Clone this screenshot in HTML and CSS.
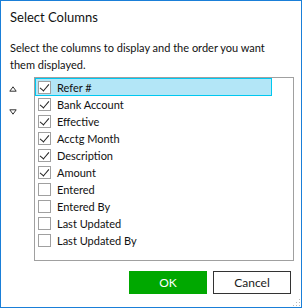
FILE: index.html
```html
<!DOCTYPE html>
<html lang="en">
<head>
    <meta charset="UTF-8">
    <title>Select Columns</title>
    <link rel="stylesheet" href="styles.css">
</head>
<body>

<div class="dialog">
    <div class="title">Select Columns</div>
    <p class="intro">Select the columns to display and the order you want them displayed.</p>

    <div class="content">
        <!-- Flechas para mover -->
        <div class="arrows">
            <svg width="8" height="6" viewBox="0 0 8 6"><path d="M4 0.8 L7.2 5.2 L0.8 5.2 Z" fill="none" stroke="#333" stroke-width="1"/></svg>
            <svg width="8" height="6" viewBox="0 0 8 6"><path d="M0.8 0.8 L7.2 0.8 L4 5.2 Z" fill="none" stroke="#333" stroke-width="1"/></svg>
        </div>

        <div class="column-list">
            <div class="col-row selected"><span class="box checked"></span>Refer #</div>
            <div class="col-row"><span class="box checked"></span>Bank Account</div>
            <div class="col-row"><span class="box checked"></span>Effective</div>
            <div class="col-row"><span class="box checked"></span>Acctg Month</div>
            <div class="col-row"><span class="box checked"></span>Description</div>
            <div class="col-row"><span class="box checked"></span>Amount</div>
            <div class="col-row"><span class="box"></span>Entered</div>
            <div class="col-row"><span class="box"></span>Entered By</div>
            <div class="col-row"><span class="box"></span>Last Updated</div>
            <div class="col-row"><span class="box"></span>Last Updated By</div>
        </div>
    </div>

    <div class="footer-buttons">
        <button class="btn-ok">OK</button>
        <button class="btn-cancel">Cancel</button>
    </div>

    <div class="grip"></div>
</div>

</body>
</html>
```

FILE: styles.css
```css
* {
    box-sizing: border-box;
    font-family: Lato, 'Noto Sans', sans-serif;
}

body {
    margin: 0;
    padding: 0;
    background-color: #ffffff;
}

.dialog {
    position: relative;
    width: 302px;
    height: 308px;
    border: 1px solid #1a7fd8;
    background-color: #ffffff;
    color: #111111;
}

.title {
    font-size: 13px;
    line-height: 16px;
    padding: 8px 0 0 9px;
}

.intro {
    margin: 0;
    padding: 14px 20px 0 9px;
    font-size: 11px;
    line-height: 17px;
}

.content {
    display: flex;
    margin-top: 4px;
}

.arrows {
    width: 33px;
    display: flex;
    flex-direction: column;
    align-items: center;
    gap: 17px;
    padding-top: 9px;
    padding-right: 9px;
}

.column-list {
    width: 260px;
    height: 184px;
    border: 1px solid #a0a0a0;
    padding: 0;
}

.col-row {
    display: flex;
    align-items: center;
    width: 237px;
    height: 17px;
    font-size: 11px;
    border: 1px solid transparent;
    padding-left: 2px;
}

.col-row.selected {
    background-color: #b3e6f7;
    border-color: #00c8f0;
    height: 18px;
}

.box {
    width: 13px;
    height: 13px;
    border: 1px solid #a0a0a0;
    background-color: #ffffff;
    margin-right: 6px;
    position: relative;
}

.box.checked::after {
    content: "";
    position: absolute;
    left: 3px;
    top: 0px;
    width: 4px;
    height: 8px;
    border-right: 1.5px solid #222;
    border-bottom: 1.5px solid #222;
    transform: rotate(40deg);
}

/* BOTONES */
.footer-buttons {
    display: flex;
    justify-content: flex-end;
    gap: 6px;
    padding: 10px 10px 0 0;
}

.footer-buttons button {
    width: 78px;
    height: 23px;
    font-size: 12px;
    border-radius: 0;
    cursor: pointer;
}

.btn-ok {
    background-color: #00a800;
    color: #ffffff;
    border: 1px solid #00a800;
}

.btn-cancel {
    background-color: #ffffff;
    color: #1a1a1a;
    border: 1px solid #333333;
}

.grip {
    position: absolute;
    right: 1px;
    bottom: 1px;
    width: 8px;
    height: 8px;
    background-image: radial-gradient(circle, #b8b8b8 1px, transparent 1px);
    background-size: 3px 3px;
    clip-path: polygon(100% 0, 100% 100%, 0 100%);
}
```
